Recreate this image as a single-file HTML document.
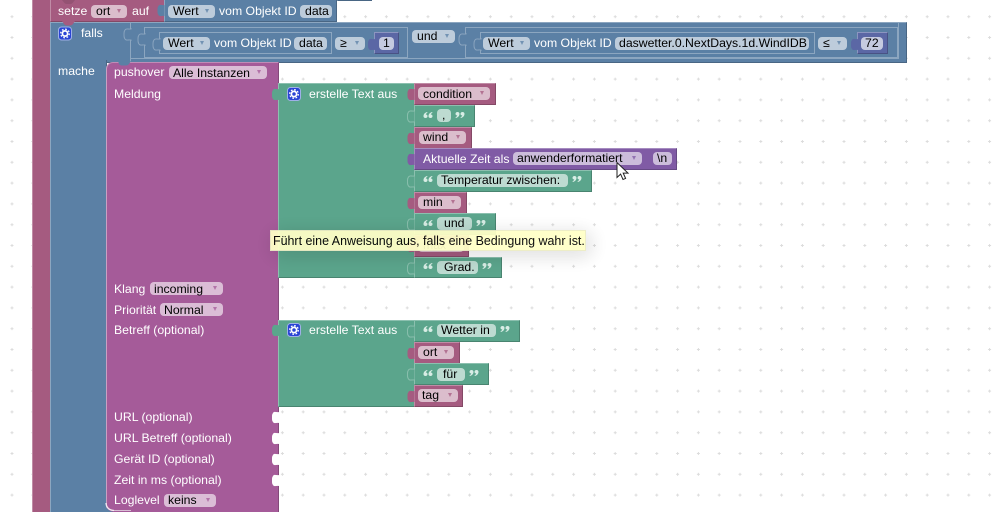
<!DOCTYPE html>
<html><head><meta charset="utf-8"><style>
html,body{margin:0;padding:0;background:#fff}
#w{position:relative;width:999px;height:512px;overflow:hidden;font:12.25px/14px "Liberation Sans",sans-serif;background:#fff}
svg{position:absolute;left:0;top:0}
.b{position:absolute;box-sizing:border-box;border:1px solid;}
.ro{background:#a55b80;border-color:#c08ca6 #844966 #844966 #c08ca6}
.bl{background:#5b80a5;border-color:#8ca6c0 #496684 #496684 #8ca6c0}
.pu{background:#a55b99;border-color:#c08cb7 #844a7a #844a7a #c08cb7}
.gr{background:#5ba58c;border-color:#8cc0af #498470 #498470 #8cc0af}
.vi{background:#805ba5;border-color:#a68cc0 #664984 #664984 #a68cc0}
.nu{background:#5b67a5;border-color:#8c95c0 #495284 #495284 #8c95c0}
.t{position:absolute;color:#fff;white-space:nowrap}
.f{position:absolute;height:13px;line-height:13px;background:rgba(255,255,255,.6);border-radius:4px;color:#000;padding-left:5px;box-sizing:border-box;white-space:nowrap}
.f i{position:absolute;right:6px;top:4px;width:0;height:0;border:2.500px solid transparent;border-bottom:0;border-top:4px solid #5b80a5;opacity:.75}
.f.r i{border-top-color:#a55b80}
.f.p i{border-top-color:#a55b99}
.f.v i{border-top-color:#805ba5}
#tip{position:absolute;left:270px;top:230px;width:316px;height:21px;box-sizing:border-box;background:#ffffc7;border:1px solid #ececc4;opacity:.94;box-shadow:4px 4px 20px 1px rgba(0,0,0,.15);color:#000;font-size:12.45px;line-height:20px;padding-left:2px;white-space:nowrap}
</style></head><body><div id="w">
<svg width="999" height="512">
<defs>
<pattern id="g" x="1.6" y="6.3" width="20.8" height="20.8" patternUnits="userSpaceOnUse"><path d="M8.9 10.4h3M10.4 8.9v3" stroke="#dcdcdc" stroke-width="1"/></pattern>
</defs>
<rect width="999" height="512" fill="url(#g)"/>
</svg>

<div class="b ro" style="left:32px;top:-3px;width:20px;height:520px"></div>
<div class="b bl" style="left:50px;top:22px;width:857px;height:41px"></div>
<div class="b bl" style="left:50px;top:60px;width:57px;height:460px;border-top:0"></div>
<div class="b ro" style="left:50px;top:-2px;width:115px;height:24px"></div>
<div class="b bl" style="left:164px;top:-2px;width:173px;height:24px"></div>
<div class="b bl" style="left:337px;top:-2px;width:35px;height:3px"></div>

<div class="b bl" style="left:130px;top:22px;width:769px;height:37px;border-bottom-color:#8ca6c0;border-right-color:#8ca6c0"></div>
<div class="b bl" style="left:130px;top:55px;width:1px;height:8px;border-width:0;background:#8ca6c0"></div>
<div class="b bl" style="left:144px;top:27px;width:264px;height:31px;border-color:#8ca6c0 #8ca6c0 #8ca6c0 #8ca6c0"></div>
<div class="b bl" style="left:159px;top:32px;width:173px;height:22px;border-color:#8ca6c0"></div>
<div class="b nu" style="left:374px;top:32px;width:25px;height:22px"></div>
<div class="b bl" style="left:465px;top:27px;width:433px;height:31px;border-color:#8ca6c0"></div>
<div class="b bl" style="left:480px;top:32px;width:335px;height:22px;border-color:#8ca6c0"></div>
<div class="b nu" style="left:857px;top:32px;width:31px;height:22px"></div>

<div class="b pu" style="left:105.500px;top:62px;width:173.500px;height:460px;border-radius:7px 0 0 0;border-left-color:#c9a0c2"></div>

<div class="b gr" style="left:278px;top:83px;width:137px;height:195px"></div>
<div class="b ro" style="left:414px;top:83px;width:82px;height:22px"></div>
<div class="b gr" style="left:414px;top:105px;width:61px;height:22px"></div>
<div class="b ro" style="left:414px;top:127px;width:58px;height:22px"></div>
<div class="b vi" style="left:414px;top:148px;width:263px;height:22px"></div>
<div class="b gr" style="left:414px;top:170px;width:178px;height:22px"></div>
<div class="b ro" style="left:414px;top:192px;width:53px;height:22px"></div>
<div class="b gr" style="left:414px;top:213px;width:82px;height:22px"></div>
<div class="b ro" style="left:414px;top:235px;width:55px;height:22px"></div>
<div class="b gr" style="left:414px;top:257px;width:88px;height:21px"></div>

<div class="b gr" style="left:278px;top:320px;width:137px;height:87px"></div>
<div class="b gr" style="left:414px;top:320px;width:106px;height:22px"></div>
<div class="b ro" style="left:414px;top:342px;width:46px;height:22px"></div>
<div class="b gr" style="left:414px;top:363px;width:75px;height:22px"></div>
<div class="b ro" style="left:414px;top:385px;width:49px;height:22px"></div>

<svg width="999" height="512">
<defs>
<path id="tab" d="M7 0V1C4 1.500 2 0 1 2 0 3.500 0 4 0 6.500S0 9.500 1 11C2 13 4 11.500 7 12V13"/>
<g id="ic"><rect x=".5" y=".5" width="13" height="13" rx="3" fill="#2a44d4" stroke="#9fb0e8"/><circle cx="7" cy="7" r="2.600" fill="none" stroke="#fff" stroke-width="1.700"/><circle cx="7" cy="7" r="4.300" fill="none" stroke="#fff" stroke-width="1.300" stroke-dasharray="1.700 1.680"/></g>
<g id="ql"><path d="M0 4.200C0 2 1.500.6 3.600 0l.4.7C2.900 1.200 2.300 1.900 2.300 2.500 3.500 2.500 4 3.300 4 4.200 4 5.200 3.200 6 2 6 .8 6 0 5.200 0 4.200zM5 4.200C5 2 6.500.6 8.600 0l.4.7C7.900 1.200 7.300 1.900 7.300 2.500 8.500 2.500 9 3.300 9 4.200 9 5.200 8.200 6 7 6 5.800 6 5 5.200 5 4.200z"/></g>
<g id="qr"><use href="#ql" transform="rotate(180 4.500 3)"/></g>
</defs>
<!-- statement notches -->
<path d="M62 21h13l-2 3q-1 1.500-3 1.500h-3q-2 0-3-1.500z" fill="#a55b80"/>
<path d="M62 0h13l-2 2.500q-1 1.500-3 1.500h-3q-2 0-3-1.500z" fill="#844966" opacity=".5"/>
<path d="M118 61h13l-2 3q-1 1.500-3 1.500h-4q-2 0-3-1.500z" fill="#5b80a5"/>
<!-- bottom-left corner of the pushover block -->
<path d="M105 503V512H114Q106 511 105 503z" fill="#5b80a5"/>
<path d="M106 503Q106.500 510 114 510.500" fill="none" stroke="#f4eaf2" stroke-width="1.300"/>
<path d="M114 510.500H131" fill="none" stroke="#d9bdd4" stroke-width="1"/>
<!-- header tabs -->
<use href="#tab" x="157.500" y="4" fill="#5b80a5"/>
<g fill="#5b80a5" stroke="#8ca6c0" stroke-width=".9">
<use href="#tab" x="124" y="28"/><use href="#tab" x="138" y="33"/><use href="#tab" x="153" y="38"/>
<use href="#tab" x="459" y="33"/><use href="#tab" x="474" y="38"/>
</g>
<use href="#tab" x="368" y="38" fill="#5b67a5"/><use href="#tab" x="851" y="38" fill="#5b67a5"/>
<!-- green output tabs -->
<use href="#tab" x="272" y="88" fill="#5ba58c"/><use href="#tab" x="272" y="324" fill="#5ba58c"/>
<!-- child tabs -->
<g fill="#a55b80"><use href="#tab" x="407.500" y="88"/><use href="#tab" x="407.500" y="132"/><use href="#tab" x="407.500" y="197"/><use href="#tab" x="407.500" y="240"/><use href="#tab" x="407.500" y="347"/><use href="#tab" x="407.500" y="390"/></g>
<use href="#tab" x="407.500" y="153" fill="#805ba5"/>
<g fill="#5ba58c" stroke="#8cc0af" stroke-width=".9"><use href="#tab" x="407.500" y="110"/><use href="#tab" x="407.500" y="175"/><use href="#tab" x="407.500" y="218"/><use href="#tab" x="407.500" y="262"/><use href="#tab" x="407.500" y="325"/><use href="#tab" x="407.500" y="368"/></g>
<!-- empty inputs -->
<g fill="#fff"><use href="#tab" x="272" y="411"/><use href="#tab" x="272" y="432"/><use href="#tab" x="272" y="453"/><use href="#tab" x="272" y="474"/></g>
<!-- icons -->
<use href="#ic" x="58" y="26.500"/><use href="#ic" x="287" y="87"/><use href="#ic" x="287" y="323"/>
<!-- quotes -->
<g fill="#d8ede5">
<use href="#ql" x="423.500" y="112"/><use href="#qr" x="455.500" y="112"/>
<use href="#ql" x="423.500" y="176"/><use href="#qr" x="572.500" y="176"/>
<use href="#ql" x="423.500" y="220"/><use href="#qr" x="476.500" y="220"/>
<use href="#ql" x="423.500" y="263"/><use href="#qr" x="482.500" y="263"/>
<use href="#ql" x="423.500" y="326"/><use href="#qr" x="500.500" y="326"/>
<use href="#ql" x="423.500" y="370"/><use href="#qr" x="469.500" y="370"/>
</g>
</svg>

<span class="t" style="left:58px;top:4px">setze</span>
<div class="f r" style="left:91px;top:5px;width:36px">ort<i></i></div>
<span class="t" style="left:132px;top:4px">auf</span>
<div class="f" style="left:168px;top:5px;width:47px">Wert<i></i></div>
<span class="t" style="left:219px;top:4px">vom Objekt ID</span>
<div class="f" style="left:300px;top:5px;width:32px">data</div>

<span class="t" style="left:81px;top:26px">falls</span>
<div class="f" style="left:163px;top:37px;width:47px">Wert<i></i></div>
<span class="t" style="left:214px;top:36px">vom Objekt ID</span>
<div class="f" style="left:294px;top:37px;width:33px">data</div>
<div class="f" style="left:335px;top:37px;width:30px">≥<i></i></div>
<div class="f" style="left:379px;top:37px;width:15px;background:rgba(255,255,255,.65);padding-left:4px">1</div>
<div class="f" style="left:412px;top:30px;width:43px">und<i></i></div>
<div class="f" style="left:483px;top:37px;width:47px">Wert<i></i></div>
<span class="t" style="left:534px;top:36px">vom Objekt ID</span>
<div class="f" style="left:615px;top:37px;width:194px;padding-left:4px">daswetter.0.NextDays.1d.WindIDB</div>
<div class="f" style="left:818px;top:37px;width:29px">≤<i></i></div>
<div class="f" style="left:861px;top:37px;width:22px;background:rgba(255,255,255,.65);padding-left:4px">72</div>

<span class="t" style="left:58px;top:64px">mache</span>
<span class="t" style="left:114px;top:65px">pushover</span>
<div class="f p" style="left:169px;top:66px;width:98px;padding-left:4px;line-height:14px">Alle Instanzen<i></i></div>
<span class="t" style="left:114px;top:87px">Meldung</span>
<span class="t" style="left:114px;top:282px">Klang</span>
<div class="f p" style="left:150px;top:282px;width:73px;padding-left:4px;line-height:14px">incoming<i></i></div>
<span class="t" style="left:114px;top:303px">Priorität</span>
<div class="f p" style="left:160px;top:303px;width:63px;padding-left:4px;line-height:14px">Normal<i></i></div>
<span class="t" style="left:114px;top:323px">Betreff (optional)</span>
<span class="t" style="left:114px;top:410px">URL (optional)</span>
<span class="t" style="left:114px;top:431px">URL Betreff (optional)</span>
<span class="t" style="left:114px;top:452px">Gerät ID (optional)</span>
<span class="t" style="left:114px;top:473px">Zeit in ms (optional)</span>
<span class="t" style="left:114px;top:493px">Loglevel</span>
<div class="f p" style="left:164px;top:494px;width:52px;padding-left:4px">keins<i></i></div>

<span class="t" style="left:309px;top:87px">erstelle Text aus</span>
<div class="f r" style="left:418px;top:87px;width:72px;line-height:14px">condition<i></i></div>
<div class="f" style="left:437px;top:109px;width:14px;padding-left:5px">,</div>
<div class="f r" style="left:419px;top:131px;width:47px;padding-left:4px">wind<i></i></div>
<span class="t" style="left:423px;top:152px">Aktuelle Zeit als</span>
<div class="f v" style="left:513px;top:152px;width:129px;padding-left:4px">anwenderformatiert<i></i></div>
<div class="f" style="left:653px;top:152px;width:19px;padding-left:4px">\n</div>
<div class="f" style="left:437px;top:174px;width:131px;padding-left:4px">Temperatur zwischen:</div>
<div class="f r" style="left:418px;top:196px;width:43px">min<i></i></div>
<div class="f" style="left:437px;top:217px;width:35px;padding-left:7px">und</div>
<div class="f r" style="left:418px;top:239px;width:46px">max<i></i></div>
<div class="f" style="left:437px;top:261px;width:41px;padding-left:7px">Grad.</div>

<span class="t" style="left:309px;top:323px">erstelle Text aus</span>
<div class="f" style="left:437px;top:324px;width:59px;padding-left:4px">Wetter in</div>
<div class="f r" style="left:418px;top:346px;width:36px">ort<i></i></div>
<div class="f" style="left:437px;top:368px;width:28px;padding-left:6px">für</div>
<div class="f r" style="left:418px;top:389px;width:40px;padding-left:4px">tag<i></i></div>

<div id="tip">Führt eine Anweisung aus, falls eine Bedingung wahr ist.</div>

<svg width="999" height="512"><path d="M617 162.500v15l3.600-3.400 2.400 5.400 2.600-1.100-2.400-5.300h4.800z" fill="#fff" stroke="#222" stroke-width="1"/></svg>
</div></body></html>
